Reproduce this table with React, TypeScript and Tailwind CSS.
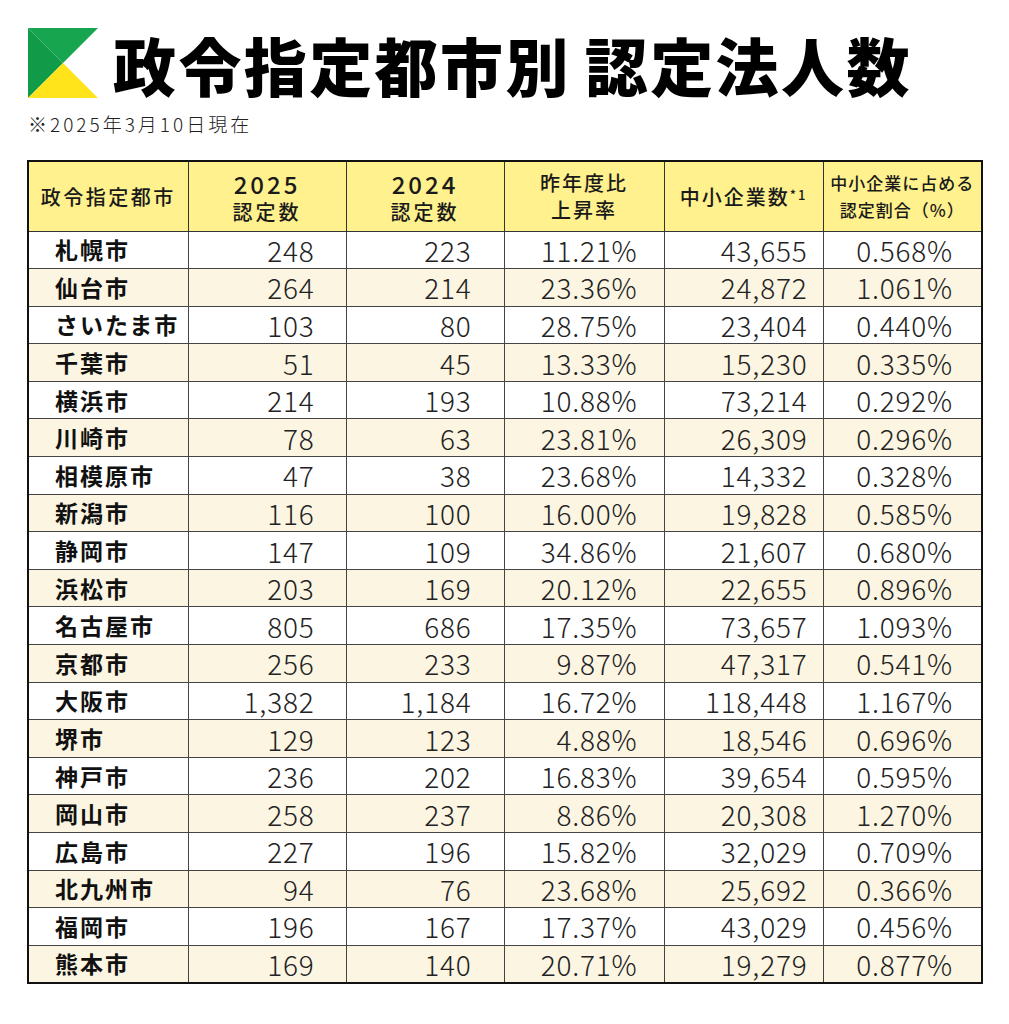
const rows: [string, string, string, string, string, string][] = [
  ['札幌市', '248', '223', '11.21%', '43,655', '0.568%'],
  ['仙台市', '264', '214', '23.36%', '24,872', '1.061%'],
  ['さいたま市', '103', '80', '28.75%', '23,404', '0.440%'],
  ['千葉市', '51', '45', '13.33%', '15,230', '0.335%'],
  ['横浜市', '214', '193', '10.88%', '73,214', '0.292%'],
  ['川崎市', '78', '63', '23.81%', '26,309', '0.296%'],
  ['相模原市', '47', '38', '23.68%', '14,332', '0.328%'],
  ['新潟市', '116', '100', '16.00%', '19,828', '0.585%'],
  ['静岡市', '147', '109', '34.86%', '21,607', '0.680%'],
  ['浜松市', '203', '169', '20.12%', '22,655', '0.896%'],
  ['名古屋市', '805', '686', '17.35%', '73,657', '1.093%'],
  ['京都市', '256', '233', '9.87%', '47,317', '0.541%'],
  ['大阪市', '1,382', '1,184', '16.72%', '118,448', '1.167%'],
  ['堺市', '129', '123', '4.88%', '18,546', '0.696%'],
  ['神戸市', '236', '202', '16.83%', '39,654', '0.595%'],
  ['岡山市', '258', '237', '8.86%', '20,308', '1.270%'],
  ['広島市', '227', '196', '15.82%', '32,029', '0.709%'],
  ['北九州市', '94', '76', '23.68%', '25,692', '0.366%'],
  ['福岡市', '196', '167', '17.37%', '43,029', '0.456%'],
  ['熊本市', '169', '140', '20.71%', '19,279', '0.877%'],
]

function Logo() {
  return (
    <svg width="70" height="70" viewBox="0 0 70 70" className="shrink-0">
      <polygon points="0,0 70,0 35,35" fill="#17a64f" />
      <polygon points="0,0 35,35 0,70" fill="#119a48" />
      <polygon points="35,35 70,70 0,70" fill="#ffe41c" />
    </svg>
  )
}

export default function App() {
  const th = 'border border-[#333] bg-[#fff18d] font-medium text-[#1a1a1a] leading-[27px]'
  const td = 'border border-[#444] font-light text-[28px] text-[#222] text-right leading-none tracking-[0.8px]'
  return (
    <div className="w-[1009px] h-[1024px] bg-white pt-[28px] pl-[28px] font-['Noto_Sans_CJK_JP','Noto_Sans',sans-serif]">
      <div className="flex items-center gap-[15px]">
        <Logo />
        <h1 className="text-[63px] font-black leading-none tracking-[2.4px] text-black">
          政令指定都市別<span className="inline-block w-[14px]" />認定法人数
        </h1>
      </div>
      <p className="mt-[16px] text-[19px] font-light text-[#222] leading-none tracking-[3px]">
        ※2025年3月10日現在
      </p>

      <table className="mt-[27px] -ml-[1px] border-collapse border-[2.5px] border-[#111] table-fixed w-[954px]">
        <colgroup>
          <col className="w-[160px]" />
          <col className="w-[158px]" />
          <col className="w-[158px]" />
          <col className="w-[160px]" />
          <col className="w-[159px]" />
          <col className="w-[159px]" />
        </colgroup>
        <thead>
          <tr className="h-[70px]">
            <th className={`${th} text-[20px] tracking-[2.5px]`}>政令指定都市</th>
            <th className={`${th} text-[20px] tracking-[3px]`}>
              <div className="text-[24px] tracking-[3px] leading-[30px]">2025</div>
              <div className="leading-[25px]">認定数</div>
            </th>
            <th className={`${th} text-[20px] tracking-[3px]`}>
              <div className="text-[24px] tracking-[3px] leading-[30px]">2024</div>
              <div className="leading-[25px]">認定数</div>
            </th>
            <th className={`${th} text-[20px] tracking-[2px]`}>
              <div>昨年度比</div>
              <div>上昇率</div>
            </th>
            <th className={`${th} text-[20px] tracking-[2px]`}>
              中小企業数<sup className="text-[13px] relative -top-[5px] align-baseline">*1</sup>
            </th>
            <th className={`${th} text-[17px] tracking-[1px] leading-[26px]`}>
              <div>中小企業に占める</div>
              <div>認定割合（%）</div>
            </th>
          </tr>
        </thead>
        <tbody>
          {rows.map((r, i) => (
            <tr key={r[0]} className={`h-[37.6px] ${i % 2 === 1 ? 'bg-[#fbf5e2]' : 'bg-white'}`}>
              <td className="border border-[#444] pl-[26px] text-[23px] font-bold text-[#111] tracking-[2px] leading-none">
                {r[0]}
              </td>
              <td className={`${td} pr-[31px]`}>{r[1]}</td>
              <td className={`${td} pr-[32px]`}>{r[2]}</td>
              <td className={`${td} pr-[26px]`}>{r[3]}</td>
              <td className={`${td} pr-[15px]`}>{r[4]}</td>
              <td className={`${td} pr-[28px]`}>{r[5]}</td>
            </tr>
          ))}
        </tbody>
      </table>
    </div>
  )
}
